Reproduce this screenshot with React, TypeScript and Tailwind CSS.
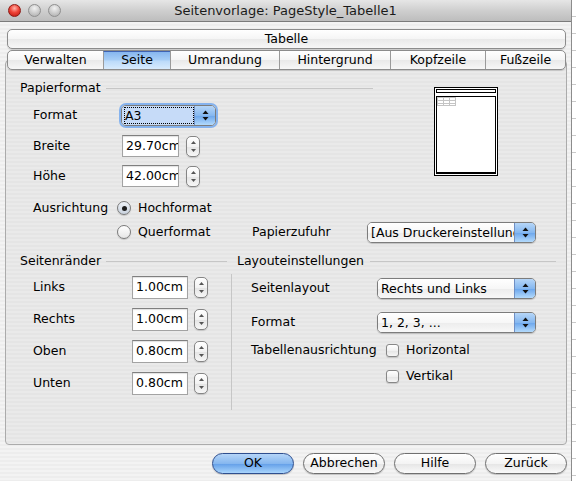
import clsx from "clsx";

/** Up/down arrows inside the blue end of an Aqua popup */
function PopupArrows() {
  return (
    <svg width="7" height="11" viewBox="0 0 7 11" aria-hidden>
      <path d="M3.5 0.5 L6.5 4 L0.5 4 Z" fill="#111" />
      <path d="M0.5 7 L6.5 7 L3.5 10.5 Z" fill="#111" />
    </svg>
  );
}

function Popup({
  value,
  className,
  focused,
}: {
  value: string;
  className: string;
  focused?: boolean;
}) {
  return (
    <div
      className={clsx(
        "flex h-[21px] overflow-hidden rounded-[5px] border border-[#7c7c7c] shadow-[0_1px_1px_rgba(0,0,0,0.18)]",
        focused && "ring-[2px] ring-[#86b3ee]",
        className,
      )}
    >
      <div
        className={clsx(
          "flex min-w-0 flex-1 items-center overflow-hidden whitespace-nowrap pl-[3px]",
          focused
            ? "bg-[#c6dbf8]"
            : "bg-[linear-gradient(180deg,#ffffff_0%,#f7f7f7_50%,#ececec_51%,#f8f8f8_100%)]",
        )}
      >
        <span
          className={clsx(
            "leading-[15px]",
            focused && "w-[68px] outline outline-1 outline-dotted outline-black",
          )}
        >
          {value}
        </span>
      </div>
      <div className="flex w-[21px] items-center justify-center border-l border-[#6f8fc4] bg-[linear-gradient(180deg,#b6d6f8_0%,#86b8f0_50%,#6aa5ec_51%,#b3dafc_100%)]">
        <PopupArrows />
      </div>
    </div>
  );
}

function Spinner() {
  return (
    <div className="flex h-[21px] w-[14px] flex-col items-center justify-between rounded-[5px] border border-[#858585] bg-[linear-gradient(180deg,#ffffff_0%,#f2f2f2_50%,#e4e4e4_51%,#f7f7f7_100%)] py-[4px] shadow-[0_1px_1px_rgba(0,0,0,0.15)]">
      <svg width="5" height="3" viewBox="0 0 5 3" aria-hidden>
        <path d="M2.5 0 L5 3 L0 3 Z" fill="#555" />
      </svg>
      <svg width="5" height="3" viewBox="0 0 5 3" aria-hidden>
        <path d="M0 0 L5 0 L2.5 3 Z" fill="#555" />
      </svg>
    </div>
  );
}

function Field({ value, className }: { value: string; className: string }) {
  return (
    <div
      className={clsx(
        "flex h-[22px] items-center overflow-hidden whitespace-nowrap border border-[#a3a3a3] border-t-[#7f7f7f] bg-white pl-[3px] shadow-[inset_0_1px_1px_rgba(0,0,0,0.12)]",
        className,
      )}
    >
      {value}
    </div>
  );
}

function Radio({ checked }: { checked?: boolean }) {
  return (
    <div
      className={clsx(
        "flex h-[14px] w-[14px] shrink-0 items-center justify-center rounded-full border border-[#7a7a7a] shadow-[0_1px_1px_rgba(0,0,0,0.15)]",
        checked
          ? "bg-[linear-gradient(180deg,#eef2f7_0%,#c9d2de_100%)]"
          : "bg-[linear-gradient(180deg,#ffffff_0%,#e6e6e6_100%)]",
      )}
    >
      {checked ? <div className="h-[5px] w-[5px] rounded-full bg-[#1d1d1d]" /> : null}
    </div>
  );
}

function Checkbox() {
  return (
    <div className="h-[13px] w-[13px] shrink-0 rounded-[3px] border border-[#878787] bg-[linear-gradient(180deg,#ffffff_0%,#f1f1f1_50%,#e4e4e4_51%,#f6f6f6_100%)] shadow-[0_1px_1px_rgba(0,0,0,0.15)]" />
  );
}

function SectionHead({ title, line }: { title: string; line: string }) {
  return (
    <div className="flex h-[16px] items-center">
      <span className="whitespace-nowrap">{title}</span>
      <div className={clsx("h-px bg-[#c6c6c6]", line)} />
    </div>
  );
}

function PagePreview() {
  return (
    <svg width="64" height="89" viewBox="0 0 64 89" aria-hidden>
      <rect x="0.5" y="0.5" width="63" height="88" fill="#fff" stroke="#000" />
      <rect x="2.5" y="2.5" width="59" height="3" fill="#fff" stroke="#000" />
      <rect x="2.5" y="9.5" width="59" height="76" fill="#fff" stroke="#000" />
      <rect x="2" y="85" width="60" height="2" fill="#000" />
      <g stroke="#c4c4c4" fill="none">
        <rect x="3.5" y="10.5" width="18" height="8" />
        <line x1="3.5" y1="13.5" x2="21.5" y2="13.5" />
        <line x1="3.5" y1="16.5" x2="21.5" y2="16.5" />
        <line x1="9.5" y1="10.5" x2="9.5" y2="18.5" />
        <line x1="15.5" y1="10.5" x2="15.5" y2="18.5" />
      </g>
    </svg>
  );
}

const TABS = [
  { label: "Verwalten", w: "w-[95px]" },
  { label: "Seite", w: "w-[67px]", active: true },
  { label: "Umrandung", w: "w-[109px]" },
  { label: "Hintergrund", w: "w-[111px]" },
  { label: "Kopfzeile", w: "w-[95px]" },
  { label: "Fußzeile", w: "flex-1" },
];

const MARGINS = [
  { label: "Links", value: "1.00cm", mt: "mt-[7px]" },
  { label: "Rechts", value: "1.00cm", mt: "mt-[9px]" },
  { label: "Oben", value: "0.80cm", mt: "mt-[9px]" },
  { label: "Unten", value: "0.80cm", mt: "mt-[9px]" },
];

function AquaButton({ label, primary }: { label: string; primary?: boolean }) {
  return (
    <div
      className={clsx(
        "flex h-[21px] w-[82px] items-center justify-center rounded-full border shadow-[0_1px_1px_rgba(0,0,0,0.2)]",
        primary
          ? "border-[#2f4f8f] bg-[linear-gradient(180deg,#b5d5f8_0%,#86b7ef_50%,#629ee8_51%,#a9d5fc_100%)]"
          : "border-[#707070] bg-[linear-gradient(180deg,#ffffff_0%,#f4f4f4_50%,#e5e5e5_51%,#fafafa_100%)]",
      )}
    >
      {label}
    </div>
  );
}

export default function App() {
  return (
    <div className="flex h-[481px] w-[576px] overflow-hidden font-['DejaVu_Sans',sans-serif] text-[12.5px] text-black">
      <div className="flex h-full w-[572px] flex-col border-r border-[#8c8c8c] bg-[repeating-linear-gradient(180deg,#ededed_0px,#ededed_2px,#f3f3f3_2px,#f3f3f3_4px)]">
        {/* title bar */}
        <div className="grid h-[22px] grid-cols-[1fr_auto_1fr] items-center border-b border-[#7b7b7b] bg-[linear-gradient(180deg,#e6e6e6_0%,#cfcfcf_50%,#bdbdbd_100%)]">
          <div className="ml-[8px] flex gap-[7px]">
            <div className="h-[13px] w-[13px] rounded-full border border-[#8e1a14] bg-[radial-gradient(circle_at_50%_30%,#ffb3a8_0%,#f0463a_45%,#b8130c_100%)]" />
            <div className="h-[13px] w-[13px] rounded-full border border-[#8f8f8f] bg-[radial-gradient(circle_at_50%_30%,#f2f2f2_0%,#cdcdcd_50%,#a9a9a9_100%)]" />
            <div className="h-[13px] w-[13px] rounded-full border border-[#8f8f8f] bg-[radial-gradient(circle_at_50%_30%,#f2f2f2_0%,#cdcdcd_50%,#a9a9a9_100%)]" />
          </div>
          <span className="whitespace-nowrap text-[13px] text-[#1a1a1a]">
            Seitenvorlage: PageStyle_Tabelle1
          </span>
          <div />
        </div>

        {/* tab rows */}
        <div className="relative z-10 ml-[7px] mt-[7px] w-[559px]">
          <div className="flex h-[20px] items-center justify-center rounded-[5px] border border-[#8c8c8c] bg-[linear-gradient(180deg,#ffffff_0%,#f5f5f5_50%,#e9e9e9_51%,#f7f7f7_100%)] shadow-[0_1px_1px_rgba(0,0,0,0.15)]">
            Tabelle
          </div>
          <div className="mt-[1px] flex h-[20px] overflow-hidden rounded-[5px] border border-[#8c8c8c] bg-[linear-gradient(180deg,#ffffff_0%,#f5f5f5_50%,#e9e9e9_51%,#f7f7f7_100%)] shadow-[0_1px_1px_rgba(0,0,0,0.15)]">
            {TABS.map((t, i) => (
              <div
                key={t.label}
                className={clsx(
                  "flex items-center justify-center",
                  t.w,
                  i > 0 && "border-l border-[#9a9a9a]",
                  t.active &&
                    "border-t border-t-[#3f63b3] bg-[linear-gradient(180deg,#86b6ef_0%,#a6cdf6_45%,#bcdbfa_55%,#d8ebfd_100%)]",
                )}
              >
                {t.label}
              </div>
            ))}
          </div>
        </div>

        {/* tab panel */}
        <div className="-mt-[10px] ml-[5px] h-[385px] w-[562px] rounded-[4px] border border-[#ababab] bg-[repeating-linear-gradient(180deg,#e5e5e5_0px,#e5e5e5_2px,#eaeaea_2px,#eaeaea_4px)] pt-[9px]">
          {/* Papierformat */}
          <div className="flex">
            <div className="w-[367px]">
              <div className="mt-[10px] pl-[14px]">
                <SectionHead title="Papierformat" line="ml-[5px] flex-1" />
              </div>
              <div className="mt-[8px] flex h-[22px] items-center pl-[27px]">
                <span className="w-[88px]">Format</span>
                <Popup value="A3" focused className="h-[19px] w-[95px]" />
              </div>
              <div className="mt-[9px] flex h-[22px] items-center pl-[27px]">
                <span className="w-[89px]">Breite</span>
                <Field value="29.70cm" className="w-[57px]" />
                <div className="ml-[7px]">
                  <Spinner />
                </div>
              </div>
              <div className="mt-[8px] flex h-[22px] items-center pl-[27px]">
                <span className="w-[89px]">Höhe</span>
                <Field value="42.00cm" className="w-[57px]" />
                <div className="ml-[7px]">
                  <Spinner />
                </div>
              </div>
            </div>
            <div className="ml-[61px] mt-[17px]">
              <PagePreview />
            </div>
          </div>
          <div className="mt-[10px] flex h-[22px] items-center pl-[27px]">
            <span className="w-[84px]">Ausrichtung</span>
            <Radio checked />
            <span className="ml-[7px]">Hochformat</span>
          </div>
          <div className="mt-[2px] flex h-[22px] items-center">
            <div className="flex w-[246px] items-center pl-[111px]">
              <Radio />
              <span className="ml-[7px]">Querformat</span>
            </div>
            <span className="w-[115px]">Papierzufuhr</span>
            <Popup value="[Aus Druckereinstellungen]" className="w-[169px]" />
          </div>

          {/* Seitenränder / Layouteinstellungen */}
          <div className="mt-[10px] flex">
            <div className="w-[225px]">
              <div className="pl-[14px]">
                <SectionHead title="Seitenränder" line="ml-[5px] w-[121px]" />
              </div>
              {MARGINS.map((m) => (
                <div key={m.label} className={clsx("flex h-[23px] items-center pl-[27px]", m.mt)}>
                  <span className="w-[99px]">{m.label}</span>
                  <Field value={m.value} className="h-[23px] w-[56px]" />
                  <div className="ml-[6px]">
                    <Spinner />
                  </div>
                </div>
              ))}
            </div>
            <div className="flex-1">
              <div className="pl-[6px]">
                <SectionHead title="Layouteinstellungen" line="ml-[6px] w-[186px]" />
              </div>
              <div className="mt-[5px] h-[136px] border-l border-[#c6c6c6] pl-[19px] pt-[3px]">
                <div className="flex h-[22px] items-center">
                  <span className="w-[126px]">Seitenlayout</span>
                  <Popup value="Rechts und Links" className="w-[159px]" />
                </div>
                <div className="mt-[12px] flex h-[22px] items-center">
                  <span className="w-[126px]">Format</span>
                  <Popup value="1, 2, 3, ..." className="w-[159px]" />
                </div>
                <div className="mt-[6px] flex h-[22px] items-center">
                  <span className="w-[135px] whitespace-nowrap">Tabellenausrichtung</span>
                  <Checkbox />
                  <span className="ml-[7px]">Horizontal</span>
                </div>
                <div className="mt-[4px] flex h-[22px] items-center pl-[135px]">
                  <Checkbox />
                  <span className="ml-[7px]">Vertikal</span>
                </div>
              </div>
            </div>
          </div>
        </div>

        {/* buttons */}
        <div className="mt-[8px] flex justify-end gap-[9px] pr-[4px]">
          <AquaButton label="OK" primary />
          <AquaButton label="Abbrechen" />
          <AquaButton label="Hilfe" />
          <AquaButton label="Zurück" />
        </div>
      </div>
      <div className="flex-1 bg-[repeating-linear-gradient(180deg,#ffffff_0px,#ffffff_16px,#c9c9c9_16px,#c9c9c9_17px)]" />
    </div>
  );
}
